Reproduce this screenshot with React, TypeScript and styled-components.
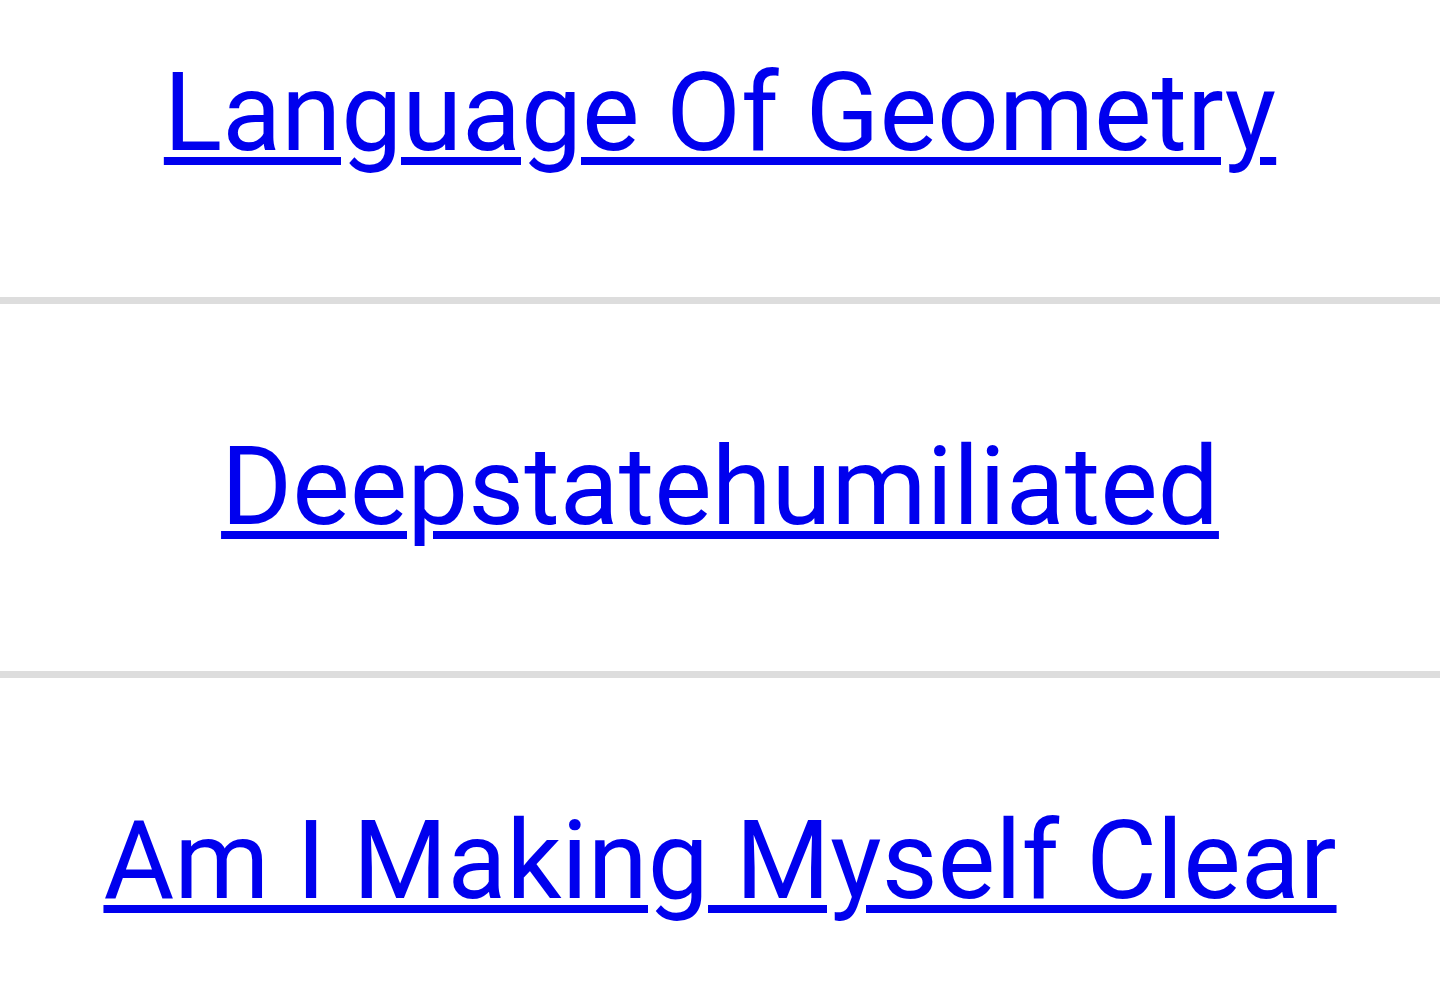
import React from "react";
import styled, { createGlobalStyle } from "styled-components";

const Global = createGlobalStyle`
  html, body { margin: 0; padding: 0; background: #ffffff; }
  body { font-family: Roboto, "Noto Sans", sans-serif; overflow: hidden; }
`;

const List = styled.ul`
  list-style: none;
  margin: -70px 0 0 0;
  padding: 0;
`;

const Item = styled.li`
  display: flex;
  justify-content: center;
  padding: 117px 0 119px;
  border-bottom: 7px solid #dddddd;
`;

const Link = styled.a`
  font-family: Roboto, sans-serif;
  font-size: 108.5px;
  line-height: 131px;
  color: #0000ee;
  text-decoration: underline;
  text-decoration-thickness: 8px;
  text-underline-offset: 7px;
  white-space: nowrap;
`;

const titles = ["Language Of Geometry", "Deepstatehumiliated", "Am I Making Myself Clear"];

export default function App() {
  return (
    <>
      <Global />
      <List>
        {titles.map((t) => (
          <Item key={t}>
            <Link href="#">{t}</Link>
          </Item>
        ))}
      </List>
    </>
  );
}
